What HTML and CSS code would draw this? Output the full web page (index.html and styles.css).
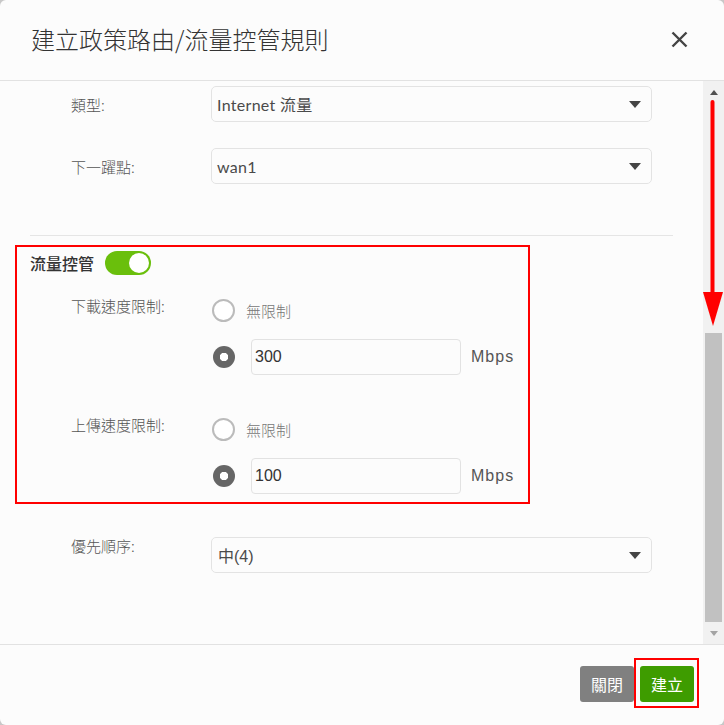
FILE: index.html
```html
<!DOCTYPE html>
<html lang="zh-Hant">
<head>
<meta charset="utf-8">
<title>建立政策路由/流量控管規則</title>
<link rel="stylesheet" href="styles.css">
</head>
<body>
<div class="dialog">
  <header class="dlg-head">
    <h1 class="title">建立政策路由/流量控管規則</h1>
    <button class="close" aria-label="close">
      <svg width="17" height="17" viewBox="0 0 17 17"><path d="M1.5 1.5 L15.5 15.5 M15.5 1.5 L1.5 15.5" stroke="#444" stroke-width="2.4" fill="none"/></svg>
    </button>
  </header>
  <div class="dlg-body">
    <div class="content">
      <div class="row">
        <div class="lbl">類型:</div>
        <div class="select"><span class="sel-text">Internet 流量</span><span class="caret"></span></div>
      </div>
      <div class="row">
        <div class="lbl">下一躍點:</div>
        <div class="select"><span class="sel-text">wan1</span><span class="caret"></span></div>
      </div>
      <div class="divider"></div>
      <div class="traffic">
        <div class="tc-head"><span>流量控管</span><span class="toggle"><span class="knob"></span></span></div>
        <div class="speed">
          <div class="speed-lbl">下載速度限制:</div>
          <div class="opts">
            <div class="opt"><span class="radio"></span><span class="opt-text">無限制</span></div>
            <div class="opt opt-input"><span class="radio checked"></span><div class="num">300</div><span class="mbps">Mbps</span></div>
          </div>
        </div>
        <div class="speed speed-up">
          <div class="speed-lbl">上傳速度限制:</div>
          <div class="opts">
            <div class="opt"><span class="radio"></span><span class="opt-text">無限制</span></div>
            <div class="opt opt-input"><span class="radio checked"></span><div class="num">100</div><span class="mbps">Mbps</span></div>
          </div>
        </div>
      </div>
      <div class="row prio">
        <div class="lbl">優先順序:</div>
        <div class="select"><span class="sel-text prio-text">中(4)</span><span class="caret"></span></div>
      </div>
    </div>
    <div class="scrollbar">
      <div class="sb-btn"><span class="tri-up"></span></div>
      <div class="sb-track"><div class="sb-thumb"></div></div>
      <div class="sb-btn"><span class="tri-down"></span></div>
    </div>
    <svg class="anno-arrow" width="24" height="250" viewBox="0 0 24 250">
      <line x1="11.5" y1="21" x2="11.5" y2="214" stroke="#ff0000" stroke-width="4" stroke-linecap="round"/>
      <polygon points="2,211 22,211 12,245" fill="#ff0000"/>
    </svg>
  </div>
  <footer class="dlg-foot">
    <button class="btn btn-close">關閉</button>
    <button class="btn btn-create">建立</button>
  </footer>
</div>
</body>
</html>
```
FILE: styles.css
```css
html, body {
  margin: 0;
  padding: 0;
}
body {
  background: #c8c8c8;
  font-family: "Noto Sans CJK TC", "Noto Sans", sans-serif;
}
.dialog {
  width: 724px;
  height: 725px;
  background: #fcfcfc;
  border-radius: 6px;
  overflow: hidden;
  display: flex;
  flex-direction: column;
  position: relative;
}
.dlg-head {
  flex: none;
  height: 81px;
  box-sizing: border-box;
  border-bottom: 1px solid #e2e2e2;
  display: flex;
  align-items: center;
  justify-content: space-between;
  padding: 0 36px 0 31px;
}
.title {
  margin: 0;
  font-size: 24px;
  font-weight: 300;
  color: #333;
  line-height: 1;
  padding-bottom: 3px;
}
.close {
  border: 0;
  background: none;
  padding: 0;
  width: 17px;
  height: 17px;
  display: flex;
  margin-bottom: 2px;
}
.dlg-body {
  flex: 1;
  min-height: 0;
  display: flex;
  position: relative;
}
.content {
  flex: 1;
  padding-top: 5px;
}
.row {
  display: flex;
  align-items: center;
  height: 36px;
  padding-left: 71px;
}
.row + .row {
  margin-top: 26px;
}
.lbl {
  width: 140px;
  font-size: 15px;
  font-weight: 300;
  color: #555;
}
.select {
  width: 441px;
  height: 36px;
  box-sizing: border-box;
  border: 1px solid #e3e3e3;
  border-radius: 5px;
  background: #fcfcfc;
  display: flex;
  align-items: center;
  justify-content: space-between;
  padding: 0 10px 0 5px;
}
.sel-text {
  font-family: "Lato", "Noto Sans CJK TC", sans-serif;
  font-size: 16px;
  letter-spacing: 0.3px;
  color: #4a4a4a;
}
.prio-text {
  font-family: "Liberation Sans", "Noto Sans CJK TC", sans-serif;
  letter-spacing: 0;
  padding-left: 1px;
}
.caret {
  width: 0;
  height: 0;
  border-left: 6px solid transparent;
  border-right: 6px solid transparent;
  border-top: 7px solid #444;
}
.divider {
  margin: 51px 0 0 30px;
  width: 643px;
  border-top: 1px solid #e5e5e5;
}
.traffic {
  margin: 9px 0 0 15px;
  width: 515px;
  box-sizing: border-box;
  border: 2px solid #ff0000;
  padding: 4px 0 8px 13px;
}
.tc-head {
  display: flex;
  align-items: center;
  gap: 11px;
  height: 24px;
  font-size: 16px;
  font-weight: 500;
  color: #333;
}
.toggle {
  width: 46px;
  height: 24px;
  border-radius: 12px;
  background: #6abf0c;
  display: flex;
  align-items: center;
  justify-content: flex-end;
  padding-right: 2px;
  box-sizing: border-box;
}
.knob {
  width: 20px;
  height: 20px;
  border-radius: 50%;
  background: #fff;
}
.speed {
  display: flex;
  margin: 23px 0 0 41px;
}
.speed-up {
  margin-top: 42px;
}
.speed-lbl {
  width: 141px;
  font-size: 15px;
  font-weight: 300;
  line-height: 16px;
  color: #555;
}
.opts {
  display: flex;
  flex-direction: column;
  gap: 17px;
}
.opt {
  display: flex;
  align-items: center;
  height: 24px;
}
.opt-input {
  height: 36px;
}
.radio {
  width: 23px;
  height: 23px;
  box-sizing: border-box;
  border: 2px solid #bbb;
  border-radius: 50%;
  background: #fff;
  flex: none;
}
.radio.checked {
  width: 22px;
  height: 22px;
  margin-left: 1px;
  border: 0;
  background: radial-gradient(circle, #fff 0 4px, #666 4.5px);
}
.opt-text {
  margin-left: 11px;
  font-size: 15px;
  font-weight: 300;
  color: #777;
}
.num {
  margin-left: 16px;
  width: 210px;
  height: 36px;
  box-sizing: border-box;
  border: 1px solid #e2e2e2;
  border-radius: 4px;
  background: #fcfcfc;
  padding-left: 3px;
  display: flex;
  align-items: center;
  font-family: "Liberation Sans", sans-serif;
  font-size: 16px;
  color: #333;
}
.mbps {
  margin-left: 10px;
  font-family: "Liberation Sans", sans-serif;
  font-size: 16px;
  letter-spacing: 1px;
  color: #555;
}
.row.prio {
  margin-top: 33px;
  align-items: flex-start;
}
.row.prio .lbl {
  line-height: 16px;
  padding-top: 1px;
}
.scrollbar {
  width: 21px;
  flex: none;
  background: #f1f1f1;
  display: flex;
  flex-direction: column;
}
.sb-btn {
  height: 22px;
  display: flex;
  align-items: center;
  justify-content: center;
}
.tri-up {
  width: 0;
  height: 0;
  border-left: 4px solid transparent;
  border-right: 4px solid transparent;
  border-bottom: 5px solid #505050;
}
.tri-down {
  width: 0;
  height: 0;
  border-left: 4px solid transparent;
  border-right: 4px solid transparent;
  border-top: 5px solid #a3a3a3;
}
.sb-track {
  flex: 1;
  display: flex;
  flex-direction: column;
  justify-content: flex-end;
  padding: 0 2px;
}
.sb-thumb {
  height: 289px;
  background: #c1c1c1;
}
.anno-arrow {
  position: absolute;
  left: 701px;
  top: 0;
}
.dlg-foot {
  flex: none;
  height: 81px;
  box-sizing: border-box;
  border-top: 1px solid #e2e2e2;
  display: flex;
  justify-content: flex-end;
  align-items: flex-start;
  gap: 6px;
  padding: 21px 30px 0 0;
}
.btn {
  width: 54px;
  height: 36px;
  border: 0;
  border-radius: 3px;
  color: #fff;
  font-family: "Noto Sans CJK TC", sans-serif;
  font-size: 16px;
  padding: 0;
}
.btn-close {
  background: #808080;
}
.btn-create {
  background: #3e9c00;
  position: relative;
}
.btn-create::after {
  content: "";
  position: absolute;
  left: -6px;
  right: -5px;
  top: -8px;
  bottom: -6px;
  border: 2px solid #ff0000;
}
```
